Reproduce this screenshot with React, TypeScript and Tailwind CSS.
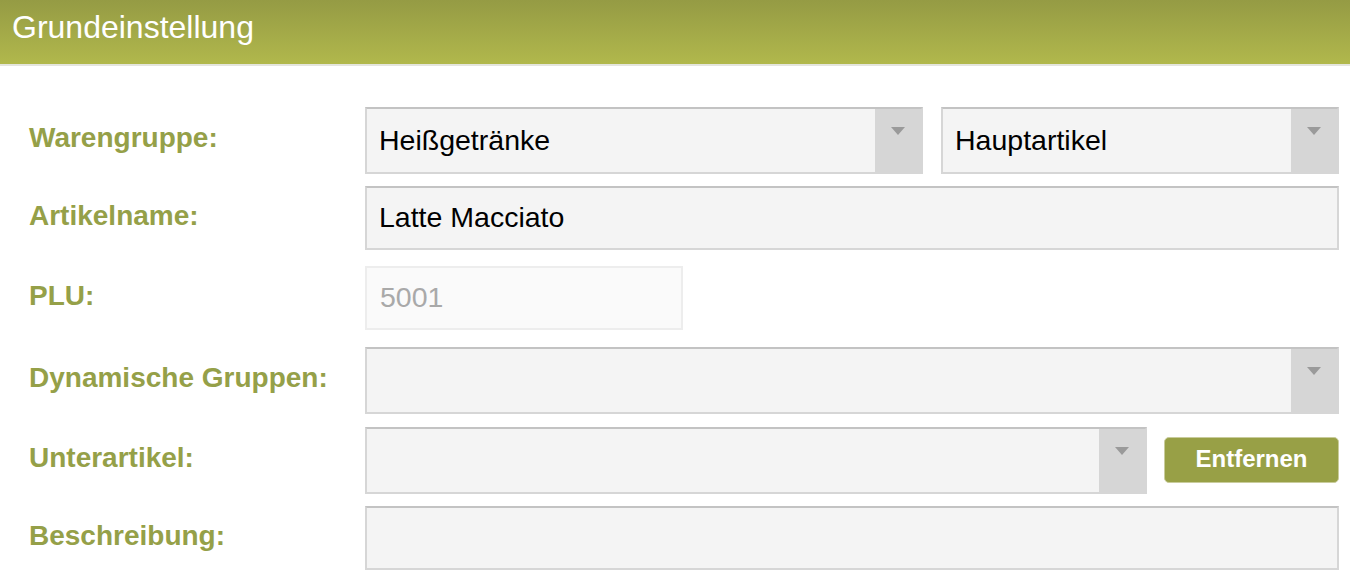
const Arrow = () => (
  <svg width="14" height="8" viewBox="0 0 14 8" className="block">
    <path d="M0 0 H14 L7 8 Z" fill="#9a9a9a" />
  </svg>
);

const Select = ({ value, width }: { value?: string; width: string }) => (
  <div
    className={`${width} h-[67px] flex bg-[#f4f4f4] border-2 border-[#d6d6d6] border-t-[#c3c3c3]`}
  >
    <div className="flex-1 flex items-center pl-[12px] text-[28.5px] text-black">
      {value}
    </div>
    <div className="w-[46px] bg-[#d6d6d6] flex justify-center pt-[18px]">
      <Arrow />
    </div>
  </div>
);

const Row = ({
  label,
  height,
  children,
}: {
  label: string;
  height: string;
  children: React.ReactNode;
}) => (
  <div className={`${height} flex items-center`}>
    <div className="w-[365px] pl-[29px] pb-[4px] text-[28px] font-bold text-[#95a048]">
      {label}
    </div>
    <div className="flex-1 flex items-center pr-[11px]">{children}</div>
  </div>
);

export default function App() {
  return (
    <div
      className="w-[1350px] h-[580px] bg-white overflow-hidden"
      style={{ fontFamily: '"Liberation Sans", Arial, sans-serif' }}
    >
      <div className="h-[64px] bg-gradient-to-b from-[#959b44] to-[#b1b84c] flex items-center pl-[12px] pb-[10px]">
        <span className="text-white text-[32px]">Grundeinstellung</span>
      </div>
      <div className="h-[2px] bg-[#e4e5dd]" />

      <div className="pt-[34px]">
        <Row label="Warengruppe:" height="h-[80px]">
          <div className="flex gap-[18px] w-full">
            <Select value="Heißgetränke" width="w-[558px]" />
            <Select value="Hauptartikel" width="w-[398px]" />
          </div>
        </Row>

        <Row label="Artikelname:" height="h-[75px]">
          <div className="w-full h-[64px] flex items-center pl-[12px] bg-[#f4f4f4] border-2 border-[#d6d6d6] border-t-[#c3c3c3] text-[28.5px] text-black">
            Latte Macciato
          </div>
        </Row>

        <Row label="PLU:" height="h-[85px]">
          <div className="w-[318px] h-[64px] flex items-center pl-[13px] bg-[#fafafa] border-2 border-[#ededed] text-[28.5px] text-[#a9a9a9]">
            5001
          </div>
        </Row>

        <Row label="Dynamische Gruppen:" height="h-[80px]">
          <Select width="w-full" />
        </Row>

        <Row label="Unterartikel:" height="h-[80px]">
          <div className="flex items-center w-full gap-[17px]">
            <Select width="w-[782px]" />
            <button className="flex-1 h-[46px] rounded-[5px] bg-[#98a046] border border-[#c9cc9c] text-white font-bold text-[24px] pb-[2px]">
              Entfernen
            </button>
          </div>
        </Row>

        <Row label="Beschreibung:" height="h-[76px]">
          <div className="w-full h-[64px] bg-[#f4f4f4] border-2 border-[#d6d6d6] border-t-[#c3c3c3]" />
        </Row>
      </div>
    </div>
  );
}
